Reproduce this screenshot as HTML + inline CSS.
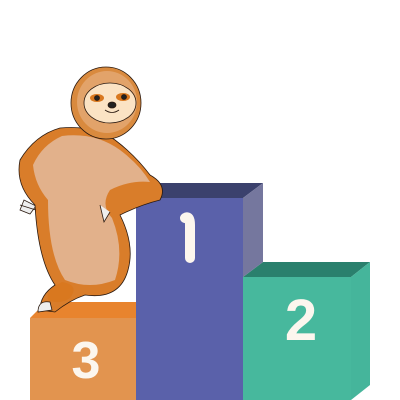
<!DOCTYPE html>
<html><head><style>
html,body{margin:0;padding:0;background:#fff;width:400px;height:400px;overflow:hidden}
text{font-family:"Liberation Sans",sans-serif;font-weight:bold}
</style></head><body>
<svg width="400" height="400" viewBox="0 0 400 400">
<polygon points="30,318 46,302 152,302 136,318" fill="#e8842e"/>
<rect x="30" y="318" width="106" height="82" fill="#e2944f"/>
<text x="86" y="378" font-size="52" fill="#fcf6ee" text-anchor="middle">3</text>
<polygon points="243,277 263,262 370,262 351,277" fill="#2a806d"/>
<polygon points="351,277 370,262 370,385 351,400" fill="#45b59b"/>
<rect x="243" y="277" width="108" height="123" fill="#47b89d"/>
<text x="301" y="340" font-size="58" fill="#fcf6ee" text-anchor="middle">2</text>
<polygon points="136,198 152,183 263,183 243,198" fill="#3b416d"/>
<polygon points="243,198 263,183 263,262 243,277" fill="#75779e"/>
<rect x="136" y="198" width="107" height="202" fill="#5a61aa"/>
<path d="M185 218 Q190 215 190 225 L190 258" stroke="#fcf6ee" stroke-width="10" stroke-linecap="round" fill="none"/>
<g stroke="#2b1a10" stroke-width="0.8">
<path d="M24 200 L20 210 L30 214 L36 206Z" fill="#eee"/>
<!-- body -->
<path d="M60 128 Q35 135 20 160 Q15 185 35 205 Q38 260 55 285 Q40 295 40 310 L55 312 Q70 300 85 295 Q120 300 128 270 Q135 245 120 215 Q140 205 160 200 Q168 185 150 175 Q135 155 115 140 Q95 125 60 128Z" fill="#d97d2a"/>
<path d="M62 136 Q42 145 33 165 Q35 185 48 200 Q48 255 65 280 Q90 290 115 280 Q125 250 112 218 Q100 205 110 190 Q130 180 150 182 Q140 165 120 150 Q95 132 62 136Z" fill="#e2b18b" stroke="none"/>
<path d="M48 300 Q45 290 62 282 Q80 285 70 298 Q60 305 48 300Z" fill="#d9781f" stroke="none"/>
<path d="M38 312 Q38 300 50 302 L52 310 Z" fill="#eee"/>
<path d="M100 205 L104 222 L110 212" fill="#eee"/>
<path d="M20 205 L36 210" stroke="#2b1a10"/>
<!-- head -->
<ellipse cx="106" cy="103" rx="35" ry="36" fill="#d98a3e"/>
<ellipse cx="107" cy="102" rx="30" ry="31" fill="#e2a36a" stroke="none"/>
<ellipse cx="110" cy="103" rx="26" ry="20" fill="#fbe3c4"/>
<ellipse cx="97" cy="98" rx="7" ry="4" fill="#d9781f" stroke="none"/>
<ellipse cx="123" cy="97" rx="7" ry="4" fill="#d9781f" stroke="none"/>
<circle cx="97" cy="98" r="2.5" fill="#222"/>
<circle cx="124" cy="97" r="2.5" fill="#222"/>
<ellipse cx="112" cy="105" rx="4" ry="3" fill="#222"/>
<path d="M105 110 Q112 115 119 110" fill="none"/>
</g>
</svg>
</body></html>
